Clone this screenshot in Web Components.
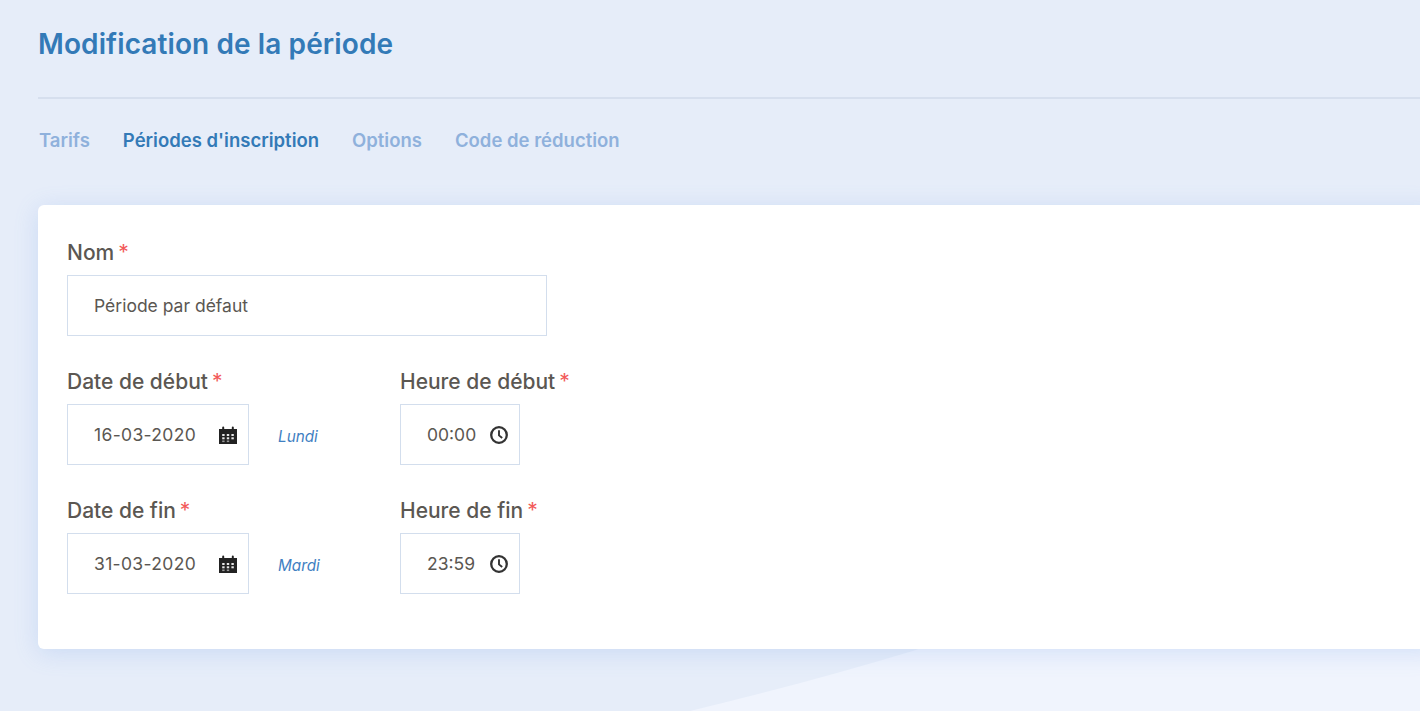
<!doctype html>
<html lang="fr"><head><meta charset="utf-8"><title>Modification de la période</title>
<style>html,body{margin:0;padding:0;height:100%;overflow:hidden;background:#e6edf9}</style></head>
<body>
<period-page>
  <page-header slot="header">Modification de la période</page-header>
  <tab-bar slot="tabs">
    <tab-item>Tarifs</tab-item>
    <tab-item active>Périodes d'inscription</tab-item>
    <tab-item>Options</tab-item>
    <tab-item>Code de réduction</tab-item>
  </tab-bar>
  <form-card slot="card">
    <form-row>
      <form-field label="Nom"><text-box wide>Période par défaut</text-box></form-field>
    </form-row>
    <form-row split>
      <form-field label="Date de début"><text-box date icon="calendar">16-03-2020</text-box><span slot="aside">Lundi</span></form-field>
      <form-field label="Heure de début"><text-box time icon="clock">00:00</text-box></form-field>
    </form-row>
    <form-row split>
      <form-field label="Date de fin"><text-box date icon="calendar">31-03-2020</text-box><span slot="aside">Mardi</span></form-field>
      <form-field label="Heure de fin"><text-box time icon="clock">23:59</text-box></form-field>
    </form-row>
  </form-card>
</period-page>
<script>
function def(name, css, html, extra){
  customElements.define(name, class extends HTMLElement{
    constructor(){super();this.attachShadow({mode:'open'}).innerHTML='<style>'+css+'</style>'+(typeof html==='function'?html(this):html);}
    connectedCallback(){ if(extra) extra(this); }
  });
}
const FONT='"Inter","Noto Sans",sans-serif';
def('period-page',`
  :host{display:block;position:relative;height:711px;overflow:hidden;background:#e6edf9;font-family:${FONT}}
  svg{position:absolute;left:0;top:0;width:1420px;height:711px}
  .flow{position:relative;display:flex;flex-direction:column;padding-left:38px}
`,`<svg viewBox="0 0 1420 711" aria-hidden="true"><path d="M690 711Q807 683 916 650Q1200 520 1420 300L1420 711Z" fill="#f0f4fd"/></svg>
<div class="flow"><slot name="header"></slot><slot name="tabs"></slot><slot name="card"></slot></div>`);
def('page-header',`
  :host{display:block;height:73px;padding-top:24px;border-bottom:2px solid #d6dfee;box-sizing:content-box}
  h1{margin:0;font:600 28px/40px ${FONT};color:#337ab7;letter-spacing:.1px;white-space:nowrap}
`,`<h1><slot></slot></h1>`);
def('tab-bar',`
  :host{display:flex;gap:33px;margin:27px 0 0 1px;height:28px}
`,`<slot></slot>`);
def('tab-item',`
  :host{display:block;font:600 18.5px/28px ${FONT};color:#8fb1dc;white-space:nowrap}
  :host([active]){color:#337ab7}
`,`<slot></slot>`);
def('form-card',`
  :host{display:flex;flex-direction:column;gap:34px;margin:51px -20px 0 0;padding:36px 0 55px 29px;background:#fff;border-radius:6px;box-shadow:0 4px 24px rgba(95,145,230,.2)}
`,`<slot></slot>`);
def('form-row',`
  :host{display:flex}
  :host([split]){display:grid;grid-template-columns:333px 200px}
`,`<slot></slot>`);
def('form-field',`
  :host{display:block}
  label{display:block;font:500 21px/24px ${FONT};color:#5b5752;margin-bottom:10px;white-space:nowrap;letter-spacing:0}
  i{font-style:normal;color:#f25a5a;margin-left:4px;font-weight:400}
  .ctl{display:flex;align-items:center}
  ::slotted([slot=aside]){margin:5px 0 0 29px;font:italic 400 15.3px/20px ${FONT};color:#3f80c2}
`,f=>`<label>${f.getAttribute('label')}<i>*</i></label><div class="ctl"><slot></slot><slot name="aside"></slot></div>`);
const ICONS={
 calendar:`<svg width="18" height="18" viewBox="0 0 18 18"><path fill="#222" d="M0 3h3.2V1.6a1 1 0 0 1 2 0V3h7.6V1.6a1 1 0 0 1 2 0V3H18v15H0z"/><g fill="#e8e8e8"><rect x="3.2" y="8" width="2.4" height="2"/><rect x="7.8" y="8" width="2.4" height="2"/><rect x="12.4" y="8" width="2.4" height="2"/><rect x="3.2" y="11.3" width="2.4" height="2"/><rect x="7.8" y="11.3" width="2.4" height="2"/><rect x="12.4" y="11.3" width="2.4" height="2"/><rect x="3.2" y="14.5" width="2.4" height="1.6" opacity=".6"/><rect x="7.8" y="14.5" width="2.4" height="1.6" opacity=".6"/></g></svg>`,
 clock:`<svg width="18" height="18" viewBox="0 0 18 18" fill="none" stroke="#333"><circle cx="9" cy="9" r="7.8" stroke-width="2.3"/><path d="M9 4.2V9.4l3.2 2.6" stroke-width="1.9"/></svg>`};
def('text-box',`
  :host{display:flex;align-items:center;justify-content:space-between;box-sizing:border-box;height:61px;padding:0 11px 0 26px;border:1px solid #d3deed;background:#fff;font:400 17.5px/24px ${FONT};color:#5b5752;white-space:nowrap}
  :host([wide]){width:480px}
  :host([date]){width:182px;letter-spacing:.33px}
  :host([time]){width:120px}
  svg{display:block;flex:none}
`,b=>`<span><slot></slot></span>${b.getAttribute('icon')?ICONS[b.getAttribute('icon')]:''}`);
</script>
</body></html>
